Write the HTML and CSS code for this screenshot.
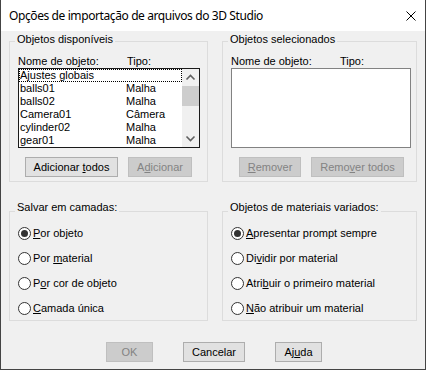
FILE: index.html
```html
<!DOCTYPE html>
<html lang="pt">
<head>
<meta charset="utf-8">
<title>Opções de importação</title>
<link rel="stylesheet" href="styles.css">
</head>
<body>
<div class="window">
  <div class="titlebar">
    <span class="title">Opções de importação de arquivos do 3D Studio</span>
    <svg class="close" width="10" height="10" viewBox="0 0 10 10"><path d="M0.5 0.5 L9.5 9.5 M9.5 0.5 L0.5 9.5" stroke="#000" stroke-width="1" fill="none"/></svg>
  </div>
  <div class="body">
    <div class="grid">
      <div class="group top-group left">
        <div class="legend">Objetos disponíveis</div>
        <div class="cols"><span class="c1">Nome de objeto:</span><span>Tipo:</span></div>
        <div class="list focused">
          <div class="items">
            <div class="item focus"><span class="ic1">Ajustes globais</span><span></span></div>
            <div class="item"><span class="ic1">balls01</span><span>Malha</span></div>
            <div class="item"><span class="ic1">balls02</span><span>Malha</span></div>
            <div class="item"><span class="ic1">Camera01</span><span>Câmera</span></div>
            <div class="item"><span class="ic1">cylinder02</span><span>Malha</span></div>
            <div class="item"><span class="ic1">gear01</span><span>Malha</span></div>
          </div>
          <div class="scrollbar">
            <div class="arrow"><svg width="17" height="17" viewBox="0 0 17 17"><path d="M4.5 10.5 L8.5 6.5 L12.5 10.5" stroke="#606060" stroke-width="1.6" fill="none"/></svg></div>
            <div class="track"><div class="thumb"></div></div>
            <div class="arrow"><svg width="17" height="17" viewBox="0 0 17 17"><path d="M4.5 6.5 L8.5 10.5 L12.5 6.5" stroke="#606060" stroke-width="1.6" fill="none"/></svg></div>
          </div>
        </div>
        <div class="btns btns-left">
          <button class="btn w93">Adicionar <u>t</u>odos</button>
          <button class="btn w64 disabled">A<u>d</u>icionar</button>
        </div>
      </div>
      <div class="group top-group right">
        <div class="legend">Objetos selecionados</div>
        <div class="cols"><span class="c1">Nome de objeto:</span><span>Tipo:</span></div>
        <div class="list empty"></div>
        <div class="btns btns-right">
          <button class="btn w62 disabled"><u>R</u>emover</button>
          <button class="btn w93 disabled">Remo<u>v</u>er todos</button>
        </div>
      </div>
      <div class="group bottom-group">
        <div class="legend low">Salvar em camadas:</div>
        <div class="radios">
          <div class="radio"><span class="circle checked"></span><span><u>P</u>or objeto</span></div>
          <div class="radio"><span class="circle"></span><span>Por <u>m</u>aterial</span></div>
          <div class="radio"><span class="circle"></span><span>P<u>o</u>r cor de objeto</span></div>
          <div class="radio"><span class="circle"></span><span><u>C</u>amada única</span></div>
        </div>
      </div>
      <div class="group bottom-group">
        <div class="legend low">Objetos de materiais variados:</div>
        <div class="radios">
          <div class="radio"><span class="circle checked"></span><span><u>A</u>presentar prompt sempre</span></div>
          <div class="radio"><span class="circle"></span><span>Di<u>v</u>idir por material</span></div>
          <div class="radio"><span class="circle"></span><span>Atri<u>b</u>uir o primeiro material</span></div>
          <div class="radio"><span class="circle"></span><span><u>N</u>ão atribuir um material</span></div>
        </div>
      </div>
    </div>
    <div class="footer">
      <button class="btn w47 disabled">OK</button>
      <button class="btn w62">Cancelar</button>
      <button class="btn w47">Aj<u>u</u>da</button>
    </div>
  </div>
</div>
</body>
</html>
```
FILE: styles.css
```css
* { box-sizing: border-box; }
html, body { margin: 0; padding: 0; background: #f0f0f0; }
.window {
  width: 426px;
  height: 370px;
  border: 1px solid #444;
  border-top: none;
  background: #f0f0f0;
  font-family: "Liberation Sans", Arial, sans-serif;
  font-size: 11px;
  line-height: 13px;
  color: #000;
}
.titlebar {
  height: 31px;
  background: #fff;
  display: flex;
  align-items: center;
  justify-content: space-between;
  padding: 0 9px 0 8px;
}
.title {
  font-family: "Noto Sans", sans-serif;
  font-size: 12px;
  letter-spacing: -0.4px;
  line-height: 16px;
  margin-top: 1px;
}
.close { display: block; margin-top: 1px; }
.body { padding: 10px 0 0 8px; }
.grid {
  display: grid;
  grid-template-columns: 199px 195px;
  column-gap: 14px;
  row-gap: 29px;
}
.group {
  border: 1px solid #dcdcdc;
  padding: 0 0 0 8px;
}
.top-group { height: 141px; }
.bottom-group { height: 110px; }
.legend {
  width: fit-content;
  margin: -9px 0 0 -3px;
  padding: 0 2px;
  background: #f0f0f0;
  height: 13px;
}
.legend.low { margin-top: -11px; }
.cols { display: flex; margin-top: 9px; height: 13px; }
.c1 { width: 109px; }
.list {
  height: 80px;
  border: 1px solid #828282;
  background: #fff;
  display: flex;
}
.left .list { width: 182px; border-color: #1a1a1a; }
.right .list { width: 180px; }
.items { width: 163px; }
.item { display: flex; height: 13px; padding-left: 1px; white-space: nowrap; }
.item.focus { outline: 1px dotted #000; outline-offset: -1px; }
.ic1 { width: 106px; }
.scrollbar {
  width: 17px;
  display: flex;
  flex-direction: column;
  background: #f0f0f0;
}
.arrow { height: 17px; }
.arrow svg { display: block; }
.track { flex: 1; }
.thumb { height: 20px; background: #cdcdcd; margin-top: 0; }
.btns { display: flex; gap: 10px; margin-top: 9px; }
.btns-left { padding-left: 7px; }
.btns-right { padding-left: 8px; }
.btn {
  height: 20px;
  padding: 0;
  border: 1px solid #adadad;
  background: #e1e1e1;
  font-family: "Liberation Sans", Arial, sans-serif;
  font-size: 11px;
  line-height: 13px;
  color: #000;
}
.btn.disabled { background: #cccccc; border-color: #bfbfbf; color: #838383; }
.w93 { width: 93px; }
.w64 { width: 64px; }
.w62 { width: 62px; }
.w47 { width: 47px; }
.radios { display: flex; flex-direction: column; gap: 12px; margin-top: 13px; }
.radio { display: flex; align-items: center; gap: 2px; height: 13px; white-space: nowrap; }
.circle {
  width: 13px;
  height: 13px;
  border: 1px solid #333;
  border-radius: 50%;
  background: #fff;
  position: relative;
  flex: none;
}
.circle.checked::after {
  content: "";
  position: absolute;
  left: 2px;
  top: 2px;
  width: 7px;
  height: 7px;
  border-radius: 50%;
  background: #333;
}
.footer {
  display: flex;
  justify-content: center;
  gap: 30px;
  margin: 21px 0 0 -8px;
  padding-left: 2px;
}
```
